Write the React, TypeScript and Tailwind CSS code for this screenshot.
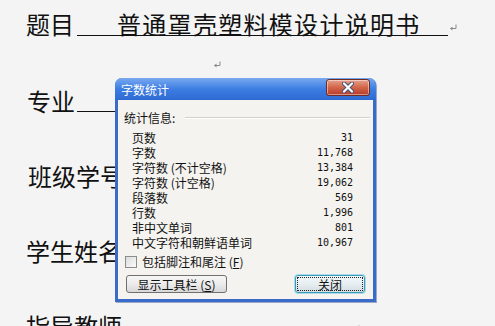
import React from "react";

const cjk = { fontFamily: '"Noto Sans CJK SC", "Liberation Sans", sans-serif' };
const mono = { fontFamily: '"DejaVu Sans Mono", "Liberation Mono", monospace' };

function Ret({ className = "" }: { className?: string }) {
  return (
    <svg width="8" height="7" viewBox="0 0 8 7" className={className}>
      <path d="M7 0.5 V4.5 H1.5" stroke="#8a8a8a" strokeWidth="1" fill="none" />
      <path d="M1 4.5 L3.5 2.5 V6.5 Z" fill="#8a8a8a" />
    </svg>
  );
}

const rows: [string, string][] = [
  ["页数", "31"],
  ["字数", "11,768"],
  ["字符数 (不计空格)", "13,384"],
  ["字符数 (计空格)", "19,062"],
  ["段落数", "569"],
  ["行数", "1,996"],
  ["非中文单词", "801"],
  ["中文字符和朝鲜语单词", "10,967"],
];

export default function App() {
  return (
    <div className="relative w-[495px] h-[326px] overflow-hidden bg-[#f4f4f4] text-[#111]" style={cjk}>
      {/* document */}
      <div className="flex flex-col text-[24px] leading-none">
        <div className="h-[48px] flex items-center pl-[26px]">
          <span>题目</span>
          <span className="ml-[3px] inline-block h-[24px] border-b border-[#111] pl-[40px] pr-[27px] tracking-[1.3px]">
            普通罩壳塑料模设计说明书
          </span>
          <Ret className="ml-[1px] mt-[7px]" />
        </div>
        <div className="h-[32px] flex items-center pl-[213px]">
          <Ret />
        </div>
        <div className="h-[42px] flex items-center pl-[27px]">
          <span>专业</span>
          <span className="ml-[2px] inline-block h-[22px] w-[120px] border-b border-[#111]" />
        </div>
        <div className="mt-[33px] h-[42px] flex items-center pl-[28px]">
          <span>班级学号</span>
        </div>
        <div className="mt-[33px] h-[42px] flex items-center pl-[26px]">
          <span>学生姓名</span>
        </div>
        <div className="mt-[33px] h-[42px] flex items-center pl-[26px]">
          <span>指导教师</span>
          <Ret className="ml-[230px] mt-[4px]" />
        </div>
      </div>

      {/* dialog */}
      <div className="absolute left-[115px] top-[78px] w-[261px] h-[224px] flex flex-col rounded-t-[7px] overflow-hidden bg-[#3a6bc9] shadow-[1px_1px_0_#9aa8c8]">
        <div className="relative h-[22px] shrink-0 flex items-center pl-[6px] bg-gradient-to-b from-[#78a9f0] via-[#3d7de2] to-[#2e69d3]">
          <span className="text-white text-[12px] leading-[15px]">字数统计</span>
          <div className="absolute right-[6px] top-[1px] w-[44px] h-[17px] rounded-[3px] border border-[#6e2b22] bg-gradient-to-b from-[#e6a08c] via-[#d0654a] to-[#b8392a] shadow-[inset_0_0_0_1px_rgba(255,255,255,0.45)] flex items-center justify-center">
            <svg width="14" height="11" viewBox="0 0 14 11">
              <path d="M3 1.5 L11 9.5 M11 1.5 L3 9.5" stroke="#44507a" strokeWidth="4" strokeLinecap="round" />
              <path d="M3 1.5 L11 9.5 M11 1.5 L3 9.5" stroke="#ffffff" strokeWidth="2.2" strokeLinecap="round" />
            </svg>
          </div>
        </div>
        <div className="mx-[3px] mb-[3px] flex-1 bg-[#f4f3ef] flex flex-col text-[12px] leading-[15px] text-[#111]">
          <div className="mt-[10px] h-[15px] flex items-center pl-[6px] pr-[3px]">
            <span>统计信息:</span>
            <div className="ml-[10px] flex-1 h-[2px] border-t border-[#d3d2c8] border-b border-b-white" />
          </div>
          <div className="mt-[5px] flex flex-col pl-[14px] pr-[20px]">
            {rows.map(([k, v]) => (
              <div key={k} className="h-[15px] flex items-center justify-between">
                <span>{k}</span>
                <span className="text-[10px] leading-[15px]" style={mono}>{v}</span>
              </div>
            ))}
          </div>
          <div className="mt-[4px] h-[15px] flex items-center pl-[7px]">
            <div className="w-[12px] h-[12px] border border-[#8c8c8c] bg-gradient-to-br from-[#dcdcdc] to-[#fafafa]" />
            <span className="ml-[5px]">包括脚注和尾注 (<span className="underline">F</span>)</span>
          </div>
          <div className="mt-[6px] flex items-center justify-between px-[8px]">
            <div className="w-[101px] h-[18px] rounded-[3px] border border-[#707070] bg-gradient-to-b from-[#f6f6f6] via-[#ececec] to-[#d8d8d8] flex items-center justify-center">
              <span>显示工具栏 (<span className="underline">S</span>)</span>
            </div>
            <div className="w-[70px] h-[18px] rounded-[3px] border border-[#3c9ab8] shadow-[0_0_0_1px_#a8dbe8] bg-gradient-to-b from-[#f4f8fa] via-[#e6eef2] to-[#d4dde2] p-[1px]">
              <div className="w-full h-full border border-dotted border-[#222] flex items-center justify-center">
                <span>关闭</span>
              </div>
            </div>
          </div>
        </div>
      </div>
    </div>
  );
}
